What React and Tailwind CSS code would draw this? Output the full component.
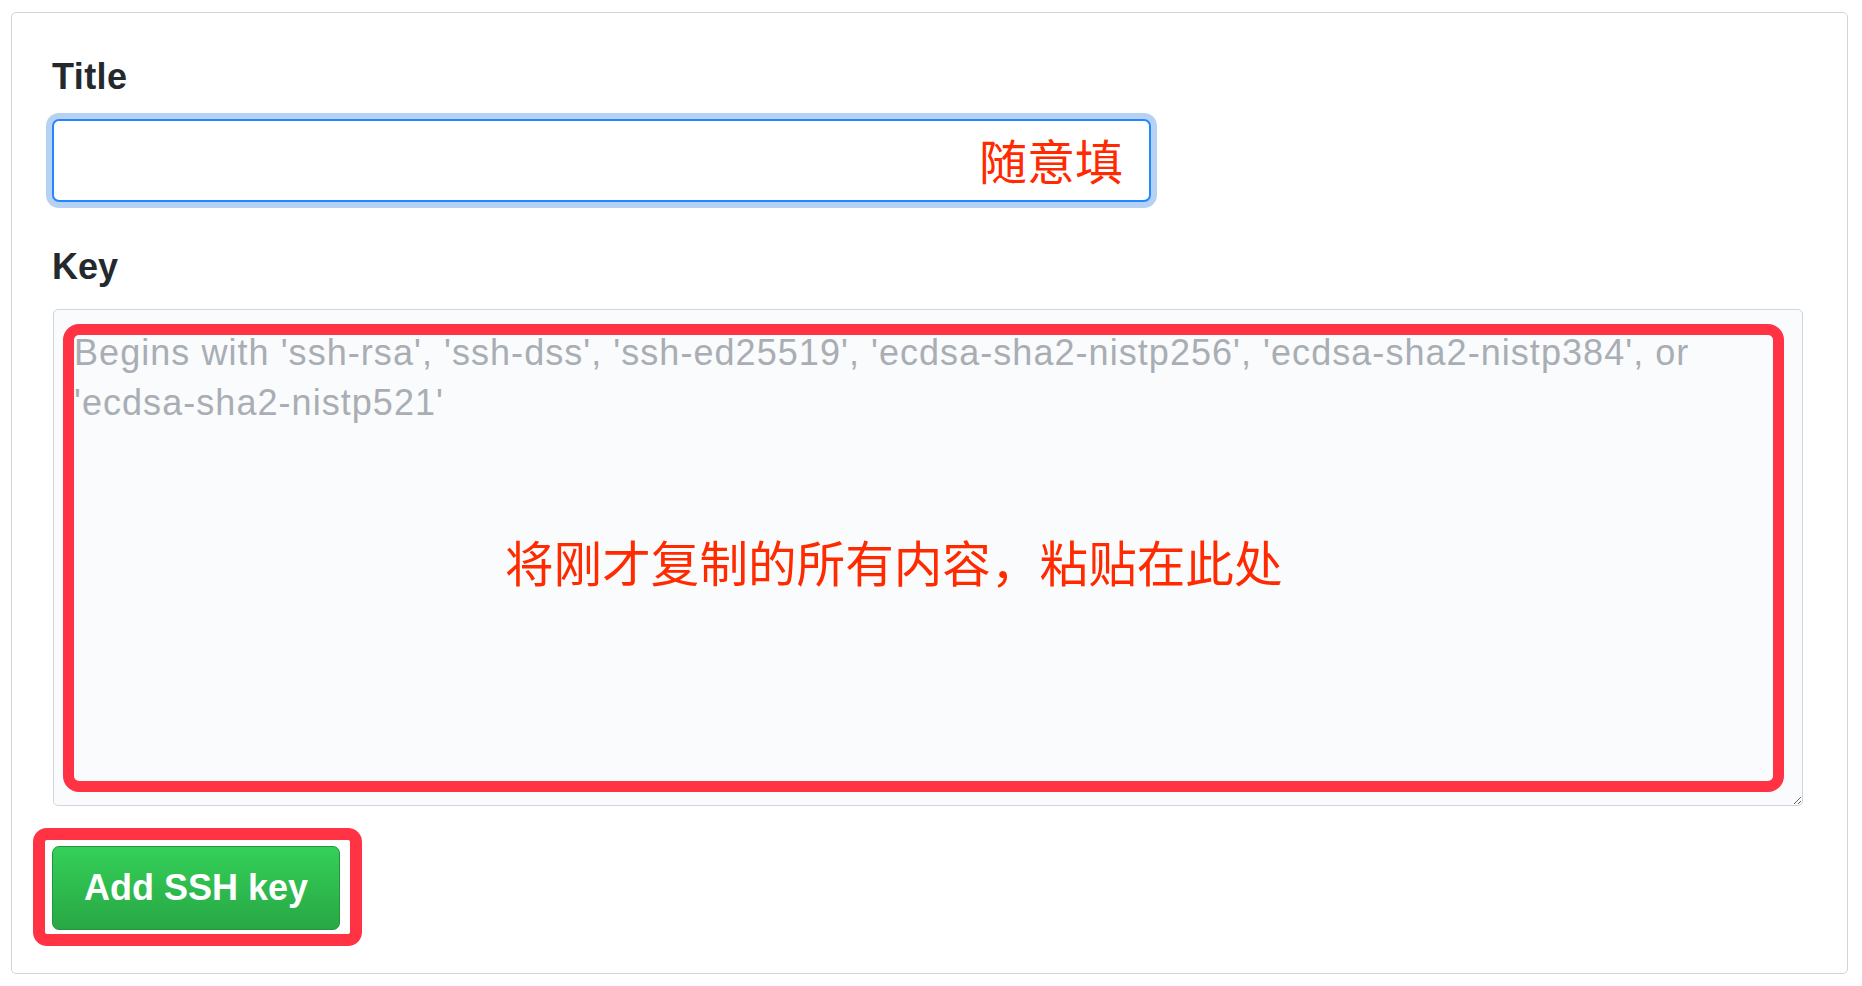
export default function App() {
    const placeholder =
        "Begins with 'ssh-rsa', 'ssh-dss', 'ssh-ed25519', 'ecdsa-sha2-nistp256', 'ecdsa-sha2-nistp384', or\n'ecdsa-sha2-nistp521'";
    return (
        <div className="w-[1862px] h-[986px] bg-white pt-[12px] pl-[11px] font-['Liberation_Sans','Noto_Sans_CJK_SC',sans-serif]">
            <div className="w-[1837px] h-[962px] border border-[#d1d5da] rounded-[5px] pt-[42px] pl-[40px]">
                {/* Title */}
                <label className="block text-[36px] leading-[44px] font-bold text-[#24292e] tracking-[0.4px]">Title</label>
                <div className="relative mt-[20px] w-[1099px] h-[83px]">
                    <input
                        type="text"
                        className="w-full h-full rounded-[7px] border-2 border-[#2188ff] bg-white shadow-[0_0_0_6px_#b6d1f3] outline-none px-[16px] text-[36px]"
                    />
                    <span className="absolute right-[28px] top-[16px] text-[48px] leading-[48px] text-[#ff2a00] font-['Noto_Sans_CJK_SC',sans-serif] pointer-events-none">
                        随意填
                    </span>
                </div>

                {/* Key */}
                <label className="block mt-[43px] text-[36px] leading-[44px] font-bold text-[#24292e]">Key</label>
                <div className="relative mt-[20px] ml-px w-[1750px] h-[497px]">
                    <textarea
                        placeholder={placeholder}
                        className="block w-full h-full resize-y rounded-[5px] border border-[#d1d5da] bg-[#fafbfc] pt-[18px] px-[20px] text-[36px] leading-[50px] tracking-[1.05px] text-[#24292e] placeholder:text-[#a8aeb4] outline-none font-['Liberation_Sans',sans-serif]"
                    />
                    {/* annotation */}
                    <div className="absolute left-[10px] top-[15px] w-[1721px] h-[468px] border-[11px] border-[#ff3344] rounded-[16px] pointer-events-none" />
                    <span className="absolute left-[452px] top-[228px] text-[48.6px] leading-[49px] text-[#ff2a00] whitespace-nowrap font-['Noto_Sans_CJK_SC',sans-serif] pointer-events-none">
                        将刚才复制的所有内容，粘贴在此处
                    </span>
                </div>

                {/* Submit */}
                <div className="relative mt-[40px] w-[288px] h-[84px]">
                    <div className="absolute left-[-19px] top-[-18px] w-[329px] h-[118px] border-[12px] border-[#ff3344] rounded-[14px] pointer-events-none" />
                    <button className="relative w-full h-full rounded-[7px] border border-[#23953f] bg-gradient-to-b from-[#34d058] to-[#28a745] text-white text-[36px] font-bold">
                        Add SSH key
                    </button>
                </div>
            </div>
        </div>
    );
}
